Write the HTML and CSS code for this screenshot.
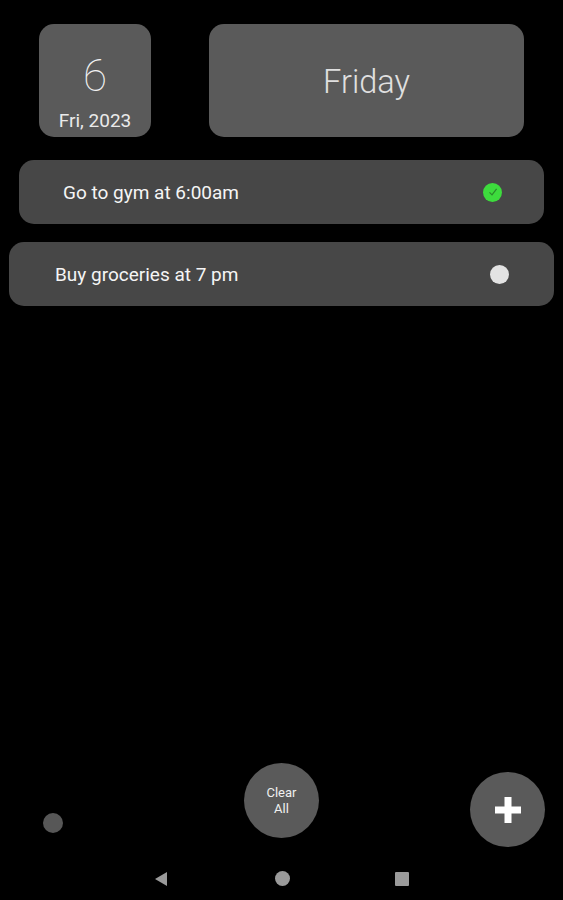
FILE: index.html
```html
<!DOCTYPE html>
<html>
<head>
<meta charset="utf-8">
<link rel="stylesheet" href="styles.css">
</head>
<body>
<div class="screen">
  <main class="main">
    <header class="header">
      <div class="date-card">
        <div class="day-num">6</div>
        <div class="day-sub">Fri, 2023</div>
      </div>
      <div class="weekday-card">Friday</div>
    </header>
    <section class="tasks">
      <div class="task task-one">
        <span class="task-text">Go to gym at 6:00am</span>
        <span class="status done">
          <svg width="12" height="12" viewBox="0 0 12 12"><path d="M2.5 6.3 L5 8.8 L9.6 2.8" fill="none" stroke="#2a8a2a" stroke-width="1.2"/></svg>
        </span>
      </div>
      <div class="task task-two">
        <span class="task-text">Buy groceries at 7 pm</span>
        <span class="status todo"></span>
      </div>
    </section>
  </main>
  <div class="controls">
    <div class="dot"></div>
    <button class="clear-btn">Clear<br>All</button>
    <button class="add-btn">
      <svg width="26" height="26" viewBox="0 0 26 26"><path d="M9.5 0 H16.5 V9.5 H26 V16.5 H16.5 V26 H9.5 V16.5 H0 V9.5 H9.5 Z" fill="#fff"/></svg>
    </button>
  </div>
  <nav class="navbar">
    <svg class="nav-back" width="14" height="16" viewBox="0 0 14 16"><path d="M13 1 V15 L1 8 Z" fill="#9a9a9a"/></svg>
    <span class="nav-home"></span>
    <span class="nav-recent"></span>
  </nav>
</div>
</body>
</html>
```

FILE: styles.css
```css
html, body {
  margin: 0;
  padding: 0;
  background: #000;
}
body {
  font-family: Roboto, "Noto Sans", "Liberation Sans", sans-serif;
  color: #fff;
}
.screen {
  width: 563px;
  height: 900px;
  display: flex;
  flex-direction: column;
  overflow: hidden;
}
.main {
  height: 763px;
  display: flex;
  flex-direction: column;
}
.header {
  display: flex;
  padding: 24px 0 0 39px;
  gap: 58px;
}
.date-card {
  width: 112px;
  height: 113px;
  background: #5a5a5a;
  border-radius: 15px;
  display: flex;
  flex-direction: column;
  align-items: center;
  box-sizing: border-box;
  padding-top: 26px;
}
.day-num {
  font-weight: 100;
  font-size: 44px;
  line-height: 52px;
  color: #f2f2f2;
}
.day-sub {
  font-size: 19px;
  line-height: 22px;
  color: #eaeaea;
  margin-top: 8px;
}
.weekday-card {
  width: 315px;
  height: 113px;
  background: #5a5a5a;
  border-radius: 15px;
  display: flex;
  align-items: center;
  justify-content: center;
  font-weight: 300;
  font-size: 32.5px;
  color: #e0e0e0;
  padding-top: 2px;
  box-sizing: border-box;
}
.tasks {
  display: flex;
  flex-direction: column;
  gap: 18px;
  margin-top: 23px;
}
.task {
  height: 64px;
  background: #474747;
  border-radius: 15px;
  display: flex;
  align-items: center;
  justify-content: space-between;
  box-sizing: border-box;
}
.task-one {
  margin: 0 19px;
  padding: 0 42px 0 44px;
}
.task-two {
  margin: 0 9px;
  padding: 0 45px 0 46px;
}
.task-text {
  font-size: 19px;
  color: #f5f5f5;
  padding-top: 1px;
}
.status {
  width: 19px;
  height: 19px;
  border-radius: 50%;
  display: flex;
  align-items: center;
  justify-content: center;
}
.done {
  background: #3ddc3d;
}
.todo {
  background: #e3e3e3;
}
.controls {
  height: 94px;
  display: flex;
  align-items: flex-start;
}
.dot {
  width: 20px;
  height: 20px;
  border-radius: 50%;
  background: #575757;
  margin: 50px 0 0 43px;
}
.clear-btn {
  width: 75px;
  height: 75px;
  border-radius: 50%;
  border: none;
  background: #5a5a5a;
  color: #f0f0f0;
  font-family: Roboto, "Noto Sans", "Liberation Sans", sans-serif;
  font-size: 13px;
  line-height: 16px;
  margin-left: 181px;
  padding: 0;
}
.add-btn {
  width: 75px;
  height: 75px;
  border-radius: 50%;
  border: none;
  background: #5a5a5a;
  margin: 9px 0 0 151px;
  padding: 0;
  display: flex;
  align-items: center;
  justify-content: center;
}
.navbar {
  height: 43px;
  display: flex;
  align-items: center;
}
.nav-back {
  margin-left: 154px;
}
.nav-home {
  width: 15px;
  height: 15px;
  border-radius: 50%;
  background: #9a9a9a;
  margin-left: 107px;
}
.nav-recent {
  width: 14px;
  height: 14px;
  background: #9a9a9a;
  border-radius: 1px;
  margin-left: 105px;
}
```
